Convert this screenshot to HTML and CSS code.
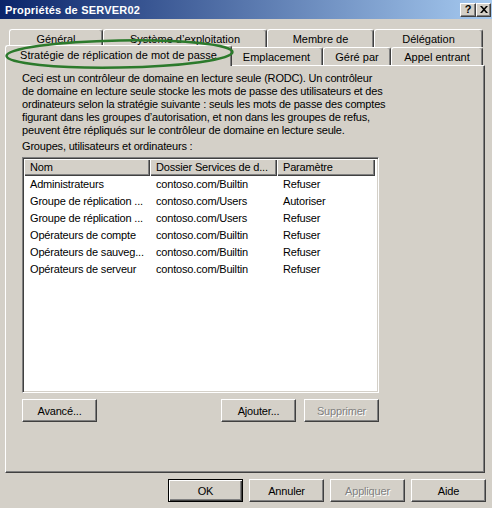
FILE: index.html
```html
<!DOCTYPE html>
<html lang="fr">
<head>
<meta charset="utf-8">
<title>Propriétés de SERVER02</title>
<link rel="stylesheet" href="styles.css">
</head>
<body>
<div class="window">
  <div class="titlebar">
    <span class="title">Propriétés de SERVER02</span>
    <div class="caption-buttons">
      <span class="cap-btn help">?</span>
      <span class="cap-btn close"><svg width="8" height="7" viewBox="0 0 8 7"><path d="M0 0h2l2 2.2L6 0h2L5 3.5 8 7H6L4 4.8 2 7H0l3-3.5z" fill="#000"/></svg></span>
    </div>
  </div>

  <div class="tabs">
    <div class="tabrow row-back">
      <div class="tab t-general">Général</div>
      <div class="tab t-systeme">Système d’exploitation</div>
      <div class="tab t-membre">Membre de</div>
      <div class="tab t-delegation">Délégation</div>
    </div>
    <div class="tabrow row-front">
      <div class="tab active t-strategie">Stratégie de réplication de mot de passe</div>
      <div class="tab t-emplacement">Emplacement</div>
      <div class="tab t-gere">Géré par</div>
      <div class="tab t-appel">Appel entrant</div>
    </div>
  </div>

  <div class="panel">
    <p class="desc">Ceci est un contrôleur de domaine en lecture seule (RODC). Un contrôleur<br>de domaine en lecture seule stocke les mots de passe des utilisateurs et des<br>ordinateurs selon la stratégie suivante : seuls les mots de passe des comptes<br>figurant dans les groupes d’autorisation, et non dans les groupes de refus,<br>peuvent être répliqués sur le contrôleur de domaine en lecture seule.</p>
    <div class="label">Groupes, utilisateurs et ordinateurs :</div>
    <div class="listview">
      <div class="lv-header">
        <div class="hcell c1">Nom</div>
        <div class="hcell c2">Dossier Services de d...</div>
        <div class="hcell c3">Paramètre</div>
      </div>
      <div class="lv-row"><div class="cell c1">Administrateurs</div><div class="cell c2">contoso.com/Builtin</div><div class="cell c3">Refuser</div></div>
      <div class="lv-row"><div class="cell c1">Groupe de réplication ...</div><div class="cell c2">contoso.com/Users</div><div class="cell c3">Autoriser</div></div>
      <div class="lv-row"><div class="cell c1">Groupe de réplication ...</div><div class="cell c2">contoso.com/Users</div><div class="cell c3">Refuser</div></div>
      <div class="lv-row"><div class="cell c1">Opérateurs de compte</div><div class="cell c2">contoso.com/Builtin</div><div class="cell c3">Refuser</div></div>
      <div class="lv-row"><div class="cell c1">Opérateurs de sauveg...</div><div class="cell c2">contoso.com/Builtin</div><div class="cell c3">Refuser</div></div>
      <div class="lv-row"><div class="cell c1">Opérateurs de serveur</div><div class="cell c2">contoso.com/Builtin</div><div class="cell c3">Refuser</div></div>
    </div>
    <div class="list-buttons">
      <button class="btn">Avancé...</button>
      <span class="spacer"></span>
      <button class="btn">Ajouter...</button>
      <button class="btn disabled">Supprimer</button>
    </div>
  </div>

  <div class="dialog-buttons">
    <button class="btn default">OK</button>
    <button class="btn">Annuler</button>
    <button class="btn disabled">Appliquer</button>
    <button class="btn">Aide</button>
  </div>

  <svg class="annotation" width="492" height="80" viewBox="0 0 492 80">
    <ellipse cx="119.5" cy="54" rx="113" ry="13.5" fill="none" stroke="#2c7a2c" stroke-width="2.5" transform="rotate(-1 119.5 54)"/>
  </svg>
</div>
</body>
</html>
```

FILE: styles.css
```css
* { box-sizing: border-box; }

html, body {
  margin: 0;
  padding: 0;
}

body {
  background: #d4d0c8;
  font-family: "Liberation Sans", Arial, sans-serif;
  font-size: 11px;
  color: #000;
}

.window {
  position: relative;
  width: 492px;
  height: 508px;
  background: #d4d0c8;
  overflow: hidden;
}

/* Title bar */
.titlebar {
  height: 19px;
  display: flex;
  align-items: center;
  justify-content: space-between;
  padding: 0 1px 0 5px;
  background: linear-gradient(to right, #0a246a, #a6caf0);
}

.title {
  color: #fff;
  font-weight: bold;
  font-size: 11px;
  letter-spacing: 0.2px;
}

.caption-buttons {
  display: flex;
}

.cap-btn {
  width: 16px;
  height: 14px;
  display: flex;
  align-items: center;
  justify-content: center;
  background: #d4d0c8;
  border: 1px solid;
  border-color: #fff #404040 #404040 #fff;
  box-shadow: inset -1px -1px #808080;
  font-weight: bold;
  font-size: 11px;
  line-height: 1;
}

.cap-btn.close { width: 15px; }

/* Tabs */
.tabs {
  margin-top: 10px;
}

.tabrow {
  display: flex;
  align-items: flex-end;
  height: 18px;
}

.row-back { padding-left: 9px; }
.row-front { padding-left: 7px; }

.tab {
  height: 18px;
  border-top: 1px solid #fff;
  border-left: 1px solid #fff;
  border-right: 1px solid #404040;
  border-radius: 3px 3px 0 0;
  box-shadow: inset -1px 0 #808080;
  background: #d4d0c8;
  padding-top: 3px;
  line-height: 13px;
  text-align: center;
  white-space: nowrap;
}

.tab.active {
  height: 21px;
  margin: 0 -2px -1px -2px;
  position: relative;
  z-index: 2;
}

.t-general { width: 94px; }
.t-systeme { width: 164px; }
.t-membre { width: 107px; }
.t-delegation { width: 109px; }

.t-strategie { width: 227px; }
.t-emplacement { width: 93px; }
.t-gere { width: 68px; }
.t-appel { width: 92px; }

/* Panel */
.panel {
  margin-left: 5px;
  width: 480px;
  height: 408px;
  border: 1px solid;
  border-color: #fff #404040 #404040 #fff;
  box-shadow: inset -1px -1px #808080;
  padding: 6px 0 0 16px;
}

.desc {
  margin: 0;
  line-height: 13px;
  white-space: nowrap;
  letter-spacing: -0.18px;
}

.label {
  margin-top: 3px;
  line-height: 13px;
  letter-spacing: -0.18px;
}

.listview {
  margin-top: 4px;
  width: 357px;
  height: 236px;
  background: #fff;
  border: 1px solid;
  border-color: #808080 #fff #fff #808080;
  box-shadow: inset 1px 1px #404040, inset -1px -1px #d4d0c8;
  padding: 1px;
}

.lv-header {
  display: flex;
  height: 17px;
}

.hcell {
  height: 17px;
  background: #d4d0c8;
  box-shadow: inset 1px 1px #fff, inset -1px -1px #404040, inset -2px -2px #808080;
  padding-left: 6px;
  line-height: 17px;
  white-space: nowrap;
  overflow: hidden;
  letter-spacing: -0.18px;
}

.lv-row {
  display: flex;
  height: 17px;
}

.cell {
  padding-left: 6px;
  line-height: 17px;
  white-space: nowrap;
  overflow: hidden;
  letter-spacing: -0.18px;
}

.c1 { width: 126px; }
.c2 { width: 127px; }
.c3 { width: 98px; }

.list-buttons {
  margin-top: 6px;
  width: 357px;
  display: flex;
  gap: 8px;
}

.spacer { flex: 1; }

/* Buttons */
.btn {
  width: 75px;
  height: 23px;
  padding: 0;
  margin: 0;
  font-family: inherit;
  font-size: 11px;
  color: #000;
  background: #d4d0c8;
  border: 1px solid;
  border-color: #fff #404040 #404040 #fff;
  box-shadow: inset -1px -1px #808080;
  border-radius: 0;
  letter-spacing: -0.18px;
}

.btn.disabled {
  color: #808080;
  text-shadow: 1px 1px #fff;
}

.btn.default {
  border-color: #000;
  box-shadow: inset 1px 1px #fff, inset -1px -1px #404040, inset -2px -2px #808080;
}

.dialog-buttons {
  margin-top: 6px;
  display: flex;
  justify-content: flex-end;
  gap: 6px;
  padding-right: 6px;
}

/* Annotation */
.annotation {
  position: absolute;
  left: 0;
  top: 0;
  z-index: 5;
  pointer-events: none;
}
```
